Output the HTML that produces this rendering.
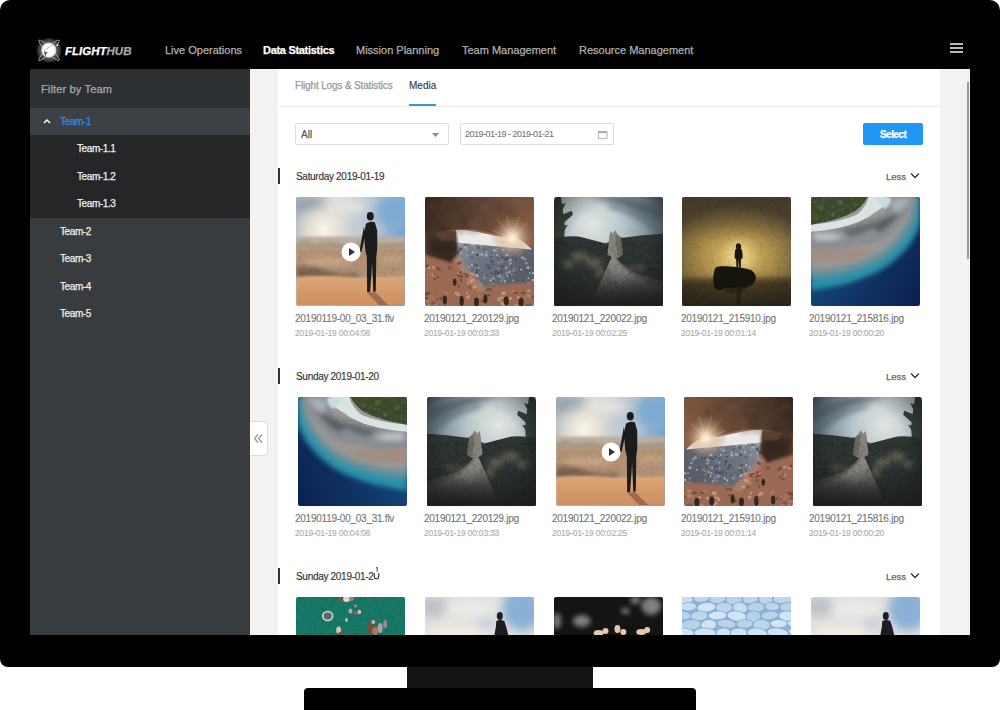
<!DOCTYPE html>
<html><head><meta charset="utf-8">
<style>
*{margin:0;padding:0;box-sizing:border-box}
html,body{width:1000px;height:710px;overflow:hidden;background:#fff;font-family:"Liberation Sans",sans-serif}
.abs{position:absolute}
.t{position:absolute;white-space:nowrap;line-height:1}
.t,.nav,.srow,.less{-webkit-text-stroke:0.25px currentColor}
.shead{-webkit-text-stroke:0.15px currentColor}
.fname,.fdate{-webkit-text-stroke:0.1px currentColor}
#mon{position:absolute;left:0;top:0;width:1000px;height:667px;background:#000;border-radius:10px 10px 8px 8px}
#neck{position:absolute;left:407px;top:667px;width:186px;height:21px;background:#141414}
#base{position:absolute;left:304px;top:688px;width:392px;height:30px;background:#000;border-radius:4px}
.nav{position:absolute;top:45px;font-size:11px;line-height:1;color:#b0b0b0;white-space:nowrap}
#side{position:absolute;left:30px;top:69px;width:220px;height:566px;background:#393c3f}
.srow{position:absolute;left:0;font-size:10px;line-height:1;color:#f0f0f0;white-space:nowrap;letter-spacing:-0.4px}
#gray{position:absolute;left:250px;top:69px;width:720px;height:566px;background:#f2f2f2}
#main{position:absolute;left:278px;top:69px;width:662px;height:566px;background:#fff}
#clip{position:absolute;left:250px;top:69px;width:720px;height:566px;overflow:hidden}
.photo{position:absolute;width:109px;height:109px;border-radius:2px;overflow:hidden;display:block}
.fname{position:absolute;font-size:10px;line-height:1;color:#737373;white-space:nowrap;letter-spacing:-0.25px}
.fdate{position:absolute;font-size:8.5px;line-height:1;color:#aaa;white-space:nowrap;letter-spacing:-0.2px}
.shead{position:absolute;font-size:10px;line-height:1;color:#333;white-space:nowrap;letter-spacing:-0.3px}
.less{position:absolute;font-size:9.5px;line-height:1;color:#666;white-space:nowrap}
.bar{position:absolute;left:278px;width:2px;height:16px;background:#333}
.mir{transform:scaleX(-1)}
</style></head><body>
<div id="mon"></div>
<div id="neck"></div>
<div id="base"></div>

<!-- logo -->
<svg class="abs" style="left:35px;top:36px" width="28" height="28" viewBox="0 0 28 28">
  <defs><radialGradient id="lg" cx="50%" cy="50%" r="50%"><stop offset="0" stop-color="#666"/><stop offset="0.6" stop-color="#5a5a5a"/><stop offset="0.85" stop-color="#3a3a3a"/><stop offset="1" stop-color="#111"/></radialGradient>
  <radialGradient id="lw" cx="50%" cy="50%" r="50%"><stop offset="0" stop-color="#fff"/><stop offset="0.8" stop-color="#f6f6f6"/><stop offset="1" stop-color="#bbb"/></radialGradient></defs>
  <circle cx="14" cy="14.3" r="12.5" fill="url(#lg)"/>
  <g fill="none" stroke="#b8b8b8" stroke-width="0.8">
    <ellipse cx="14" cy="14.3" rx="14.3" ry="2.6" transform="rotate(45 14 14.3)"/>
    <ellipse cx="14" cy="14.3" rx="14.3" ry="2.6" transform="rotate(-45 14 14.3)"/>
  </g>
  <circle cx="13.8" cy="14.2" r="7.6" fill="url(#lw)"/>
  <path d="M9 14.5 L19 8" stroke="#999" stroke-width="0.6"/>
  <circle cx="22.5" cy="9" r="0.9" fill="#ddd"/>
  <path d="M8.8 15.2 L13 16.8 L11.2 17.6 L10.6 20.5Z" fill="#444"/>
</svg>
<div class="t" style="left:65px;top:46px;font-size:11.5px;font-weight:bold;font-style:italic;color:#fff">FLIGHT<span style="color:#aaa">HUB</span></div>

<!-- header nav -->
<div class="nav" style="left:165px">Live Operations</div>
<div class="nav" style="left:263px;color:#fff;font-weight:bold;letter-spacing:-0.3px">Data Statistics</div>
<div class="nav" style="left:356px">Mission Planning</div>
<div class="nav" style="left:462px">Team Management</div>
<div class="nav" style="left:579px">Resource Management</div>
<!-- hamburger -->
<div class="abs" style="left:950px;top:43px;width:13px;height:2px;background:#bbb"></div>
<div class="abs" style="left:950px;top:47px;width:13px;height:2px;background:#bbb"></div>
<div class="abs" style="left:950px;top:51px;width:13px;height:2px;background:#bbb"></div>

<!-- sidebar -->
<div id="side">
  <div class="abs" style="left:0;top:0;width:220px;height:39px;background:#2d3033"></div>
  <div class="abs" style="left:0;top:39px;width:220px;height:27px;background:#3d4044"></div>
  <div class="abs" style="left:0;top:66px;width:220px;height:83px;background:#242628"></div>
  <div class="srow" style="top:15px;left:11px;color:#aaa;font-size:11px;letter-spacing:0.15px">Filter by Team</div>
  <svg class="abs" style="left:13px;top:49px" width="8" height="6" viewBox="0 0 8 6"><path d="M1 5 L4 2 L7 5" fill="none" stroke="#fff" stroke-width="1.5"/></svg>
  <div class="srow" style="top:48px;left:30px;color:#2f8de4">Team-1</div>
  <div class="srow" style="top:75px;left:47px">Team-1.1</div>
  <div class="srow" style="top:103px;left:47px">Team-1.2</div>
  <div class="srow" style="top:130px;left:47px">Team-1.3</div>
  <div class="srow" style="top:158px;left:30px">Team-2</div>
  <div class="srow" style="top:185px;left:30px">Team-3</div>
  <div class="srow" style="top:213px;left:30px">Team-4</div>
  <div class="srow" style="top:240px;left:30px">Team-5</div>
</div>

<div id="gray"></div>
<div id="main"></div>
<!-- scrollbar thumb -->
<div class="abs" style="left:967px;top:82px;width:2px;height:177px;background:#999"></div>

<!-- collapse button -->
<div class="abs" style="left:250px;top:421px;width:18px;height:35px;background:#fff;border:1px solid #ddd;border-left:none;border-radius:0 4px 4px 0"></div>
<svg class="abs" style="left:253px;top:433px" width="10" height="10" viewBox="0 0 10 10"><path d="M5 1.5 L1.5 5.5 L5 9.5 M9 1.5 L5.5 5.5 L9 9.5" fill="none" stroke="#999" stroke-width="1.3"/></svg>

<!-- tabs -->
<div class="t" style="left:295px;top:81px;font-size:10px;color:#999;letter-spacing:-0.15px">Flight Logs &amp; Statistics</div>
<div class="t" style="left:409px;top:81px;font-size:10px;color:#333;-webkit-text-stroke:0.1px #333">Media</div>
<div class="abs" style="left:409px;top:104px;width:27px;height:2px;background:#3b95dc"></div>
<div class="abs" style="left:278px;top:106px;width:662px;height:1px;background:#eee"></div>

<!-- filters -->
<div class="abs" style="left:295px;top:123px;width:154px;height:22px;border:1px solid #ddd;border-radius:2px"></div>
<div class="t" style="left:301px;top:130px;font-size:10px;color:#555">All</div>
<svg class="abs" style="left:431px;top:132px" width="9" height="6" viewBox="0 0 9 6"><path d="M1 1 L8 1 L4.5 5 Z" fill="#888"/></svg>
<div class="abs" style="left:460px;top:123px;width:154px;height:22px;border:1px solid #ddd;border-radius:2px"></div>
<div class="t" style="left:465px;top:130px;font-size:9px;color:#777;letter-spacing:-0.5px;-webkit-text-stroke:0.1px #777">2019-01-19 - 2019-01-21</div>
<svg class="abs" style="left:598px;top:130.5px" width="10" height="9" viewBox="0 0 10 9"><rect x="0.5" y="0.5" width="8.5" height="7" fill="none" stroke="#aaa" stroke-width="0.8"/><rect x="0.5" y="0.5" width="8.5" height="1.6" fill="#aaa"/></svg>
<div class="abs" style="left:863px;top:123px;width:60px;height:22px;background:#2196f3;border-radius:2px"></div>
<div class="t" style="left:880px;top:129.5px;font-size:10px;font-weight:bold;color:#fff;letter-spacing:-0.55px">Select</div>

<!-- sections -->
<div class="bar" style="top:168px"></div>
<div class="shead" style="left:296px;top:172px">Saturday 2019-01-19</div>
<div class="less" style="left:886px;top:172px">Less</div>
<svg class="abs" style="left:910px;top:172px" width="10" height="7" viewBox="0 0 10 7"><path d="M1 1.5 L5 5.5 L9 1.5" fill="none" stroke="#333" stroke-width="1.4"/></svg>

<div class="bar" style="top:368px"></div>
<div class="shead" style="left:296px;top:372px">Sunday 2019-01-20</div>
<div class="less" style="left:886px;top:372px">Less</div>
<svg class="abs" style="left:910px;top:372px" width="10" height="7" viewBox="0 0 10 7"><path d="M1 1.5 L5 5.5 L9 1.5" fill="none" stroke="#333" stroke-width="1.4"/></svg>

<div class="bar" style="top:568px"></div>
<div class="shead" style="left:296px;top:572px">Sunday 2019-01-2</div>
<svg class="abs" style="left:373px;top:566px" width="7" height="14" viewBox="0 0 7 14"><path d="M1.2 7 L1.2 10 Q1.2 13 3.5 13 Q5.8 13 5.8 10 L5.8 7" fill="none" stroke="#333" stroke-width="1.1"/><path d="M3 2.2 L4.2 1.2 L4.2 5.8" fill="none" stroke="#333" stroke-width="0.9"/></svg>
<div class="less" style="left:886px;top:572px">Less</div>
<svg class="abs" style="left:910px;top:572px" width="10" height="7" viewBox="0 0 10 7"><path d="M1 1.5 L5 5.5 L9 1.5" fill="none" stroke="#333" stroke-width="1.4"/></svg>

<svg width="0" height="0" style="position:absolute;left:0;top:0">
<defs>
  <filter id="bl05" x="-10%" y="-10%" width="120%" height="120%"><feGaussianBlur stdDeviation="0.6"/></filter>
  <filter id="bl1" x="-10%" y="-10%" width="120%" height="120%"><feGaussianBlur stdDeviation="1.2"/></filter>
  <filter id="bl2" x="-20%" y="-20%" width="140%" height="140%"><feGaussianBlur stdDeviation="2.5"/></filter>
  <filter id="bl4" x="-30%" y="-30%" width="160%" height="160%"><feGaussianBlur stdDeviation="5"/></filter>
  <filter id="noise" x="0" y="0" width="100%" height="100%">
    <feTurbulence type="fractalNoise" baseFrequency="0.35" numOctaves="2" seed="3" result="n"/>
    <feColorMatrix type="matrix" values="0 0 0 0 0  0 0 0 0 0  0 0 0 0 0  0 0 0 -1.4 0.9" in="n"/>
    <feComposite in2="SourceGraphic" operator="in"/>
  </filter>
  <filter id="grain" x="0" y="0" width="100%" height="100%">
    <feTurbulence type="fractalNoise" baseFrequency="0.28" numOctaves="3" seed="7"/>
    <feColorMatrix type="matrix" values="0 0 0 0 0  0 0 0 0 0  0 0 0 0 0  2.5 0 0 0 -1.1"/><feGaussianBlur stdDeviation="0.4"/>
  </filter>
  <filter id="grainw" x="0" y="0" width="100%" height="100%">
    <feTurbulence type="fractalNoise" baseFrequency="0.28" numOctaves="3" seed="11"/>
    <feColorMatrix type="matrix" values="0 0 0 0 1  0 0 0 0 1  0 0 0 0 1  2.5 0 0 0 -1.2"/><feGaussianBlur stdDeviation="0.4"/>
  </filter>
  <!-- desert gradients -->
  <linearGradient id="dsky" x1="0" y1="0" x2="110" y2="30" gradientUnits="userSpaceOnUse">
    <stop offset="0" stop-color="#adb6be"/><stop offset="0.35" stop-color="#e0ded8"/><stop offset="0.62" stop-color="#bcc8d2"/><stop offset="1" stop-color="#7aa6d0"/>
  </linearGradient>
  <radialGradient id="dsun" cx="28" cy="32" r="30" gradientUnits="userSpaceOnUse"><stop offset="0" stop-color="#fbf6ea"/><stop offset="0.5" stop-color="#ece5d8" stop-opacity="0.7"/><stop offset="1" stop-color="#e0d8cc" stop-opacity="0"/></radialGradient>
  <linearGradient id="dsand" x1="0" y1="80" x2="0" y2="110" gradientUnits="userSpaceOnUse"><stop offset="0" stop-color="#dca676"/><stop offset="1" stop-color="#cc8e60"/></linearGradient>
  <!-- sunset -->
  <radialGradient id="sglow" cx="56" cy="60" r="70" gradientUnits="userSpaceOnUse" gradientTransform="translate(56 60) scale(1.1 0.75) translate(-56 -60)"><stop offset="0" stop-color="#ecd27e"/><stop offset="0.2" stop-color="#d0b060"/><stop offset="0.5" stop-color="#a88a4a"/><stop offset="0.8" stop-color="#76643c"/><stop offset="1" stop-color="#544630"/></radialGradient>
  <linearGradient id="sdark" x1="0" y1="0" x2="0" y2="110" gradientUnits="userSpaceOnUse"><stop offset="0" stop-color="#3a3022" stop-opacity="0.55"/><stop offset="0.4" stop-color="#3a3022" stop-opacity="0"/><stop offset="0.72" stop-color="#2a2418" stop-opacity="0"/><stop offset="0.8" stop-color="#2a2418" stop-opacity="0.55"/><stop offset="1" stop-color="#201a12" stop-opacity="0.8"/></linearGradient>
  <!-- castle sky -->
  <radialGradient id="csky" cx="38" cy="28" r="80" gradientUnits="userSpaceOnUse"><stop offset="0" stop-color="#e2e6e4"/><stop offset="0.4" stop-color="#b8c4c8"/><stop offset="0.75" stop-color="#7a8a94"/><stop offset="1" stop-color="#4a5862"/></radialGradient>
  <linearGradient id="croad" x1="0" y1="60" x2="0" y2="110" gradientUnits="userSpaceOnUse"><stop offset="0" stop-color="#9a9894"/><stop offset="0.45" stop-color="#6c6c6a"/><stop offset="1" stop-color="#2c2c2c"/></linearGradient>
  <radialGradient id="vig" cx="55" cy="50" r="78" gradientUnits="userSpaceOnUse"><stop offset="0.5" stop-color="#000" stop-opacity="0"/><stop offset="1" stop-color="#000" stop-opacity="0.6"/></radialGradient>
  <!-- cave -->
  <linearGradient id="cvceil" x1="0" y1="0" x2="110" y2="50" gradientUnits="userSpaceOnUse"><stop offset="0" stop-color="#34261e"/><stop offset="0.5" stop-color="#624634"/><stop offset="1" stop-color="#8a6048"/></linearGradient>
  <radialGradient id="cvsun" cx="88" cy="41" r="22" gradientUnits="userSpaceOnUse"><stop offset="0" stop-color="#fffaf0"/><stop offset="0.25" stop-color="#f0d8b8" stop-opacity="0.9"/><stop offset="1" stop-color="#b08060" stop-opacity="0"/></radialGradient>
  <linearGradient id="ccity" x1="30" y1="46" x2="90" y2="90" gradientUnits="userSpaceOnUse"><stop offset="0" stop-color="#8c9098"/><stop offset="0.5" stop-color="#6a7280"/><stop offset="1" stop-color="#5a5e68"/></linearGradient>
  <!-- beach -->
  <linearGradient id="bdeep" x1="0" y1="60" x2="110" y2="110" gradientUnits="userSpaceOnUse"><stop offset="0" stop-color="#15487a"/><stop offset="1" stop-color="#0a2050"/></linearGradient>
  <!-- ice -->
  <pattern id="icep" width="20" height="13" patternUnits="userSpaceOnUse"><rect width="20" height="13" fill="#8fb4d8"/><ellipse cx="10" cy="6.5" rx="8.5" ry="5" fill="#c4dcf0"/></pattern>
  <pattern id="icep2" width="20" height="13" x="10" y="6" patternUnits="userSpaceOnUse"><ellipse cx="10" cy="6.5" rx="6" ry="3.5" fill="#d6e8f6"/></pattern>
</defs>

<symbol id="desert" viewBox="0 0 110 110">
  <rect width="110" height="110" fill="url(#dsky)"/>
  <g filter="url(#bl4)">
    <ellipse cx="12" cy="8" rx="20" ry="8" fill="#98a4b0"/>
    <ellipse cx="50" cy="10" rx="22" ry="6" fill="#e6e4e0"/>
    <ellipse cx="98" cy="14" rx="16" ry="16" fill="#7eaad2"/>
    <ellipse cx="70" cy="34" rx="18" ry="6" fill="#c4ccd4"/>
  </g>
  <rect width="110" height="52" fill="url(#dsun)"/>
  <rect y="40" width="110" height="14" fill="#bcae9e" filter="url(#bl1)"/>
  <path d="M0 46 L10 44 L20 47 L35 45 L50 48 L70 45 L90 47 L110 45 L110 53 L0 53Z" fill="#a89886" filter="url(#bl1)"/>
  <rect y="52" width="110" height="30" fill="#b39274" filter="url(#bl1)"/>
  <g filter="url(#bl2)">
    <ellipse cx="32" cy="65" rx="24" ry="4" fill="#caa886"/>
    <ellipse cx="96" cy="63" rx="14" ry="4" fill="#c2a282"/>
    <path d="M0 71 Q15 68 30 74 T62 76 L62 81 L0 82Z" fill="#7a6450"/>
  </g>
  <rect y="54" width="110" height="26" filter="url(#grain)" opacity="0.07"/>
  <path d="M0 81 Q30 78 62 82 L110 80 L110 110 L0 110Z" fill="url(#dsand)" filter="url(#bl1)"/>
  <!-- man -->
  <g fill="#1a1a1f" filter="url(#bl05)">
    <ellipse cx="75" cy="19.5" rx="3.5" ry="4.3"/>
    <path d="M70.5 27 Q75 24 79.5 25.5 L82 34 L82 52 L81 60 L80.5 95 L78 96 L76.8 66 L74.8 96 L71.8 96 L71.5 60 L70 54 L68.5 38Z"/>
    <path d="M68.5 30 L64 55 L66 56 L70 38Z"/>
  </g>
  <path d="M72 97 L84 109 L93 109 L80 96Z" fill="#6a4630" opacity="0.5" filter="url(#bl05)"/>
</symbol>

<symbol id="cave" viewBox="0 0 110 110">
  <rect width="110" height="110" fill="#8e6652"/>
  <path d="M30 45 L110 52 L110 92 L62 94 L32 66Z" fill="url(#ccity)"/>
  <g filter="url(#bl05)" opacity="0.75"><circle cx="52.0" cy="55.9" r="0.8" fill="#c4c8cc"/><circle cx="89.3" cy="71.7" r="1.1" fill="#8a7a70"/><circle cx="32.4" cy="55.7" r="1.2" fill="#8a7a70"/><circle cx="74.9" cy="80.1" r="1.2" fill="#c4c8cc"/><circle cx="47.6" cy="73.9" r="1.5" fill="#5a6270"/><circle cx="90.7" cy="52.8" r="1.0" fill="#4a505c"/><circle cx="56.9" cy="49.5" r="1.0" fill="#b0b8c0"/><circle cx="57.5" cy="58.0" r="1.4" fill="#b0b8c0"/><circle cx="60.3" cy="72.0" r="1.3" fill="#5a6270"/><circle cx="100.8" cy="62.7" r="1.3" fill="#9aa4ae"/><circle cx="33.7" cy="56.2" r="1.6" fill="#3a404a"/><circle cx="98.4" cy="87.5" r="1.0" fill="#4a505c"/><circle cx="80.9" cy="62.9" r="1.0" fill="#3a404a"/><circle cx="83.6" cy="79.4" r="1.3" fill="#c4c8cc"/><circle cx="78.7" cy="53.4" r="0.9" fill="#c4c8cc"/><circle cx="67.0" cy="58.2" r="1.3" fill="#c4c8cc"/><circle cx="47.6" cy="60.9" r="1.4" fill="#5a6270"/><circle cx="55.2" cy="58.1" r="1.5" fill="#9aa4ae"/><circle cx="75.4" cy="80.2" r="1.3" fill="#9aa4ae"/><circle cx="61.7" cy="89.8" r="0.8" fill="#4a505c"/><circle cx="73.1" cy="81.6" r="1.5" fill="#4a505c"/><circle cx="62.0" cy="55.7" r="1.2" fill="#9aa4ae"/><circle cx="37.3" cy="47.3" r="0.8" fill="#b0b8c0"/><circle cx="77.7" cy="63.9" r="1.6" fill="#8a7a70"/><circle cx="87.7" cy="78.4" r="1.4" fill="#8a7a70"/><circle cx="91.5" cy="61.7" r="1.1" fill="#3a404a"/><circle cx="66.3" cy="91.7" r="0.9" fill="#c4c8cc"/><circle cx="70.0" cy="53.8" r="1.5" fill="#b0b8c0"/><circle cx="53.9" cy="76.3" r="0.9" fill="#8a7a70"/><circle cx="59.9" cy="52.9" r="1.5" fill="#5a6270"/><circle cx="103.5" cy="74.3" r="0.7" fill="#4a505c"/><circle cx="104.3" cy="88.1" r="1.4" fill="#5a6270"/><circle cx="49.2" cy="56.8" r="1.6" fill="#8a7a70"/><circle cx="91.3" cy="51.3" r="1.6" fill="#4a505c"/><circle cx="104.3" cy="82.0" r="0.9" fill="#c4c8cc"/><circle cx="82.0" cy="66.5" r="1.1" fill="#8a7a70"/><circle cx="49.8" cy="48.1" r="1.2" fill="#b0b8c0"/><circle cx="48.4" cy="55.8" r="1.3" fill="#b0b8c0"/><circle cx="34.7" cy="48.3" r="1.5" fill="#b0b8c0"/><circle cx="35.7" cy="56.7" r="1.1" fill="#c4c8cc"/><circle cx="73.1" cy="80.4" r="1.2" fill="#8a7a70"/><circle cx="49.4" cy="68.2" r="0.9" fill="#4a505c"/><circle cx="63.9" cy="67.9" r="0.7" fill="#c4c8cc"/><circle cx="82.3" cy="76.7" r="1.1" fill="#b0b8c0"/><circle cx="57.1" cy="87.2" r="0.9" fill="#9aa4ae"/><circle cx="72.9" cy="51.9" r="1.0" fill="#9aa4ae"/><circle cx="65.5" cy="87.2" r="0.8" fill="#8a7a70"/><circle cx="82.2" cy="71.5" r="1.6" fill="#b0b8c0"/><circle cx="104.1" cy="86.6" r="1.1" fill="#9aa4ae"/><circle cx="68.5" cy="87.4" r="0.8" fill="#b0b8c0"/><circle cx="30.2" cy="64.1" r="1.4" fill="#5a6270"/><circle cx="52.8" cy="79.1" r="1.6" fill="#c4c8cc"/><circle cx="74.5" cy="80.2" r="0.9" fill="#9aa4ae"/><circle cx="47.4" cy="47.9" r="1.2" fill="#c4c8cc"/><circle cx="76.7" cy="69.6" r="1.2" fill="#5a6270"/><circle cx="62.3" cy="91.1" r="0.9" fill="#8a7a70"/><circle cx="77.6" cy="75.3" r="1.3" fill="#4a505c"/><circle cx="75.2" cy="60.5" r="0.9" fill="#3a404a"/><circle cx="87.3" cy="56.7" r="0.8" fill="#4a505c"/><circle cx="81.6" cy="67.4" r="1.5" fill="#5a6270"/><circle cx="75.0" cy="49.9" r="0.9" fill="#8a7a70"/><circle cx="100.5" cy="88.1" r="1.0" fill="#3a404a"/><circle cx="65.1" cy="71.6" r="1.3" fill="#3a404a"/><circle cx="109.0" cy="77.0" r="1.3" fill="#b0b8c0"/><circle cx="74.4" cy="90.7" r="1.5" fill="#b0b8c0"/><circle cx="40.7" cy="50.7" r="1.4" fill="#b0b8c0"/><circle cx="42.4" cy="58.8" r="1.3" fill="#9aa4ae"/><circle cx="51.1" cy="68.9" r="0.7" fill="#5a6270"/><circle cx="80.7" cy="85.6" r="0.7" fill="#b0b8c0"/><circle cx="91.7" cy="76.2" r="0.8" fill="#3a404a"/><circle cx="65.3" cy="79.6" r="0.7" fill="#8a7a70"/><circle cx="102.3" cy="71.7" r="1.0" fill="#5a6270"/><circle cx="74.2" cy="66.1" r="1.0" fill="#b0b8c0"/><circle cx="101.9" cy="84.0" r="0.7" fill="#5a6270"/><circle cx="58.6" cy="78.4" r="0.8" fill="#c4c8cc"/><circle cx="92.4" cy="88.3" r="1.6" fill="#4a505c"/><circle cx="90.0" cy="90.4" r="1.5" fill="#9aa4ae"/><circle cx="108.1" cy="84.7" r="0.7" fill="#4a505c"/><circle cx="88.9" cy="61.3" r="1.4" fill="#4a505c"/><circle cx="99.1" cy="84.7" r="0.8" fill="#3a404a"/><circle cx="86.1" cy="63.7" r="1.5" fill="#b0b8c0"/><circle cx="66.8" cy="60.0" r="1.5" fill="#5a6270"/><circle cx="61.9" cy="58.7" r="1.6" fill="#b0b8c0"/><circle cx="52.3" cy="76.4" r="1.3" fill="#4a505c"/><circle cx="97.5" cy="61.2" r="0.8" fill="#b0b8c0"/><circle cx="107.6" cy="53.7" r="0.7" fill="#3a404a"/><circle cx="77.7" cy="61.9" r="1.0" fill="#5a6270"/><circle cx="78.5" cy="70.1" r="1.5" fill="#4a505c"/><circle cx="45.2" cy="47.2" r="0.7" fill="#4a505c"/><circle cx="104.0" cy="71.4" r="1.5" fill="#c4c8cc"/><circle cx="89.0" cy="54.7" r="0.8" fill="#4a505c"/><circle cx="83.1" cy="61.2" r="1.3" fill="#3a404a"/><circle cx="70.6" cy="77.7" r="1.1" fill="#3a404a"/><circle cx="53.7" cy="51.2" r="1.3" fill="#4a505c"/><circle cx="60.3" cy="81.7" r="1.3" fill="#9aa4ae"/><circle cx="54.1" cy="71.8" r="1.0" fill="#b0b8c0"/><circle cx="78.5" cy="60.8" r="1.1" fill="#4a505c"/><circle cx="47.1" cy="68.2" r="1.4" fill="#5a6270"/><circle cx="82.7" cy="58.9" r="1.3" fill="#c4c8cc"/><circle cx="56.8" cy="85.1" r="0.9" fill="#5a6270"/><circle cx="54.8" cy="84.5" r="0.7" fill="#9aa4ae"/><circle cx="49.6" cy="68.3" r="1.4" fill="#5a6270"/><circle cx="66.4" cy="88.4" r="0.9" fill="#8a7a70"/><circle cx="85.7" cy="69.2" r="0.8" fill="#9aa4ae"/><circle cx="85.0" cy="88.7" r="1.4" fill="#5a6270"/><circle cx="66.5" cy="84.3" r="1.2" fill="#c4c8cc"/><circle cx="74.7" cy="60.5" r="1.5" fill="#5a6270"/><circle cx="79.0" cy="80.2" r="1.1" fill="#8a7a70"/><circle cx="102.5" cy="66.8" r="1.4" fill="#9aa4ae"/><circle cx="68.0" cy="57.7" r="1.5" fill="#9aa4ae"/><circle cx="68.8" cy="56.7" r="0.8" fill="#4a505c"/><circle cx="52.9" cy="58.3" r="1.5" fill="#3a404a"/><circle cx="36.4" cy="52.4" r="1.3" fill="#4a505c"/><circle cx="62.6" cy="71.6" r="0.8" fill="#4a505c"/><circle cx="96.6" cy="64.1" r="1.2" fill="#5a6270"/><circle cx="85.6" cy="87.0" r="1.2" fill="#5a6270"/><circle cx="68.2" cy="91.2" r="1.4" fill="#3a404a"/><circle cx="98.3" cy="91.7" r="1.2" fill="#4a505c"/><circle cx="88.8" cy="84.2" r="1.1" fill="#9aa4ae"/><circle cx="51.8" cy="68.8" r="1.0" fill="#4a505c"/><circle cx="84.3" cy="64.8" r="1.5" fill="#9aa4ae"/><circle cx="72.7" cy="89.4" r="1.2" fill="#8a7a70"/><circle cx="46.9" cy="61.0" r="1.5" fill="#5a6270"/><circle cx="63.7" cy="85.9" r="0.7" fill="#4a505c"/><circle cx="58.0" cy="76.9" r="1.6" fill="#5a6270"/><circle cx="33.2" cy="46.5" r="0.9" fill="#9aa4ae"/><circle cx="31.6" cy="52.5" r="1.1" fill="#9aa4ae"/><circle cx="67.2" cy="57.6" r="0.9" fill="#3a404a"/><circle cx="78.6" cy="81.6" r="1.4" fill="#b0b8c0"/><circle cx="43.1" cy="60.2" r="0.7" fill="#8a7a70"/><circle cx="55.0" cy="78.2" r="1.1" fill="#4a505c"/><circle cx="85.2" cy="75.7" r="1.3" fill="#b0b8c0"/><circle cx="54.1" cy="78.5" r="0.8" fill="#5a6270"/><circle cx="108.7" cy="83.3" r="1.2" fill="#3a404a"/><circle cx="63.6" cy="69.0" r="1.6" fill="#4a505c"/><circle cx="80.8" cy="85.6" r="0.8" fill="#c4c8cc"/><circle cx="44.1" cy="70.6" r="0.9" fill="#c4c8cc"/><circle cx="94.7" cy="71.4" r="1.1" fill="#4a505c"/><circle cx="96.1" cy="74.0" r="1.5" fill="#3a404a"/><circle cx="100.5" cy="56.9" r="1.2" fill="#4a505c"/><circle cx="83.5" cy="61.5" r="1.5" fill="#4a505c"/><circle cx="44.5" cy="55.4" r="0.9" fill="#5a6270"/><circle cx="52.4" cy="74.2" r="1.2" fill="#3a404a"/><circle cx="71.3" cy="54.4" r="1.3" fill="#9aa4ae"/><circle cx="69.1" cy="82.2" r="1.1" fill="#c4c8cc"/><circle cx="86.9" cy="67.0" r="0.8" fill="#b0b8c0"/><circle cx="54.5" cy="73.5" r="1.2" fill="#4a505c"/><circle cx="74.0" cy="62.2" r="0.9" fill="#4a505c"/><circle cx="50.1" cy="50.9" r="1.0" fill="#9aa4ae"/><circle cx="89.4" cy="91.6" r="0.9" fill="#c4c8cc"/><circle cx="47.3" cy="68.7" r="1.2" fill="#c4c8cc"/><circle cx="90.8" cy="74.2" r="1.4" fill="#b0b8c0"/><circle cx="53.7" cy="62.7" r="0.7" fill="#3a404a"/><circle cx="72.7" cy="58.4" r="1.2" fill="#b0b8c0"/><circle cx="85.8" cy="51.2" r="1.4" fill="#5a6270"/><circle cx="52.7" cy="68.5" r="0.9" fill="#3a404a"/><circle cx="68.2" cy="85.3" r="1.1" fill="#4a505c"/><circle cx="76.2" cy="78.6" r="0.8" fill="#9aa4ae"/><circle cx="75.0" cy="59.9" r="0.8" fill="#9aa4ae"/><circle cx="91.2" cy="74.7" r="1.3" fill="#5a6270"/><circle cx="92.1" cy="63.6" r="1.0" fill="#4a505c"/><circle cx="77.1" cy="66.0" r="1.3" fill="#8a7a70"/><circle cx="78.8" cy="81.3" r="0.9" fill="#5a6270"/><circle cx="42.6" cy="53.5" r="0.8" fill="#b0b8c0"/><circle cx="62.7" cy="78.8" r="1.0" fill="#4a505c"/><circle cx="86.2" cy="67.2" r="0.9" fill="#c4c8cc"/><circle cx="77.2" cy="84.4" r="1.1" fill="#9aa4ae"/><circle cx="73.6" cy="76.7" r="1.4" fill="#3a404a"/><circle cx="35.7" cy="53.1" r="1.2" fill="#3a404a"/><circle cx="95.9" cy="90.1" r="0.8" fill="#4a505c"/><circle cx="85.1" cy="79.3" r="1.2" fill="#3a404a"/><circle cx="69.5" cy="48.9" r="1.5" fill="#b0b8c0"/><circle cx="88.8" cy="74.6" r="0.8" fill="#b0b8c0"/><circle cx="107.0" cy="86.0" r="1.2" fill="#8a7a70"/><circle cx="95.7" cy="73.2" r="1.4" fill="#5a6270"/><circle cx="67.6" cy="76.9" r="0.9" fill="#3a404a"/><circle cx="76.8" cy="76.1" r="1.6" fill="#4a505c"/><circle cx="67.6" cy="65.0" r="1.3" fill="#3a404a"/><circle cx="98.6" cy="61.2" r="1.1" fill="#c4c8cc"/><circle cx="83.0" cy="64.6" r="1.2" fill="#5a6270"/><circle cx="66.4" cy="60.4" r="0.8" fill="#3a404a"/><circle cx="91.8" cy="87.4" r="1.6" fill="#5a6270"/><circle cx="82.6" cy="71.6" r="0.7" fill="#4a505c"/><circle cx="71.5" cy="75.5" r="1.3" fill="#4a505c"/><circle cx="90.8" cy="55.0" r="0.8" fill="#8a7a70"/><circle cx="80.4" cy="84.2" r="0.8" fill="#c4c8cc"/><circle cx="74.1" cy="72.1" r="0.9" fill="#b0b8c0"/><circle cx="105.8" cy="76.7" r="1.1" fill="#9aa4ae"/><circle cx="87.3" cy="69.9" r="1.1" fill="#3a404a"/><circle cx="68.6" cy="68.1" r="1.2" fill="#4a505c"/><circle cx="60.7" cy="90.2" r="1.4" fill="#8a7a70"/><circle cx="40.9" cy="48.4" r="1.4" fill="#5a6270"/><circle cx="63.2" cy="90.8" r="0.9" fill="#8a7a70"/><circle cx="97.0" cy="73.4" r="1.1" fill="#c4c8cc"/><circle cx="57.6" cy="72.0" r="1.0" fill="#8a7a70"/><circle cx="104.6" cy="87.6" r="0.9" fill="#c4c8cc"/><circle cx="60.6" cy="86.9" r="0.7" fill="#4a505c"/><circle cx="89.6" cy="79.6" r="1.0" fill="#5a6270"/><circle cx="109.1" cy="83.8" r="1.6" fill="#c4c8cc"/><circle cx="70.2" cy="73.9" r="0.8" fill="#5a6270"/></g>
  <path d="M0 52 L30 58 L40 72 L58 90 L80 88 L110 86 L110 110 L0 110Z" fill="#9a6a54" filter="url(#bl1)"/>
  <path d="M26 60 L34 62 L50 80 L62 94 L54 96 L38 78Z" fill="#b88a70" opacity="0.6" filter="url(#bl1)"/>
  <g filter="url(#bl05)" opacity="0.7"><ellipse cx="15.9" cy="102.5" rx="1.2" ry="1.7" fill="#5e3e30" transform="rotate(-14 15.9 102.5)"/><ellipse cx="8.8" cy="71.1" rx="2.0" ry="1.2" fill="#d0a888" transform="rotate(13 8.8 71.1)"/><ellipse cx="83.5" cy="102.6" rx="2.5" ry="1.1" fill="#c09478" transform="rotate(11 83.5 102.6)"/><ellipse cx="9.9" cy="108.7" rx="2.1" ry="1.6" fill="#c09478" transform="rotate(24 9.9 108.7)"/><ellipse cx="5.1" cy="98.2" rx="1.9" ry="1.3" fill="#b07e64" transform="rotate(-15 5.1 98.2)"/><ellipse cx="45.3" cy="91.5" rx="1.4" ry="0.9" fill="#5e3e30" transform="rotate(22 45.3 91.5)"/><ellipse cx="28.1" cy="52.5" rx="3.3" ry="1.6" fill="#704a3a" transform="rotate(-21 28.1 52.5)"/><ellipse cx="42.3" cy="80.0" rx="2.0" ry="1.2" fill="#5e3e30" transform="rotate(-12 42.3 80.0)"/><ellipse cx="0.9" cy="102.2" rx="3.3" ry="1.7" fill="#c09478" transform="rotate(20 0.9 102.2)"/><ellipse cx="99.3" cy="97.0" rx="2.5" ry="1.2" fill="#5e3e30" transform="rotate(8 99.3 97.0)"/><ellipse cx="34.0" cy="77.6" rx="1.9" ry="1.0" fill="#d0a888" transform="rotate(25 34.0 77.6)"/><ellipse cx="35.9" cy="76.1" rx="1.3" ry="1.4" fill="#5e3e30" transform="rotate(28 35.9 76.1)"/><ellipse cx="58.4" cy="105.0" rx="1.6" ry="1.8" fill="#5e3e30" transform="rotate(-1 58.4 105.0)"/><ellipse cx="88.7" cy="95.3" rx="3.0" ry="1.4" fill="#b07e64" transform="rotate(-25 88.7 95.3)"/><ellipse cx="43.7" cy="101.1" rx="1.9" ry="1.7" fill="#d0a888" transform="rotate(-29 43.7 101.1)"/><ellipse cx="64.3" cy="99.7" rx="1.3" ry="1.1" fill="#b07e64" transform="rotate(-28 64.3 99.7)"/><ellipse cx="7.0" cy="99.8" rx="2.6" ry="0.9" fill="#b07e64" transform="rotate(-27 7.0 99.8)"/><ellipse cx="4.1" cy="109.8" rx="1.2" ry="1.9" fill="#c09478" transform="rotate(-22 4.1 109.8)"/><ellipse cx="49.9" cy="90.9" rx="2.0" ry="1.7" fill="#d0a888" transform="rotate(-21 49.9 90.9)"/><ellipse cx="40.8" cy="77.7" rx="3.1" ry="0.9" fill="#5e3e30" transform="rotate(11 40.8 77.7)"/><ellipse cx="59.9" cy="108.7" rx="1.2" ry="1.1" fill="#b07e64" transform="rotate(28 59.9 108.7)"/><ellipse cx="104.4" cy="99.8" rx="2.7" ry="1.6" fill="#c09478" transform="rotate(6 104.4 99.8)"/><ellipse cx="2.3" cy="97.6" rx="3.5" ry="1.7" fill="#5e3e30" transform="rotate(-18 2.3 97.6)"/><ellipse cx="64.5" cy="99.2" rx="1.8" ry="1.0" fill="#5e3e30" transform="rotate(24 64.5 99.2)"/><ellipse cx="0.3" cy="101.8" rx="3.5" ry="1.4" fill="#5e3e30" transform="rotate(18 0.3 101.8)"/><ellipse cx="12.1" cy="102.3" rx="1.0" ry="1.7" fill="#5e3e30" transform="rotate(-16 12.1 102.3)"/><ellipse cx="35.6" cy="62.1" rx="1.3" ry="1.3" fill="#c09478" transform="rotate(-23 35.6 62.1)"/><ellipse cx="7.0" cy="78.0" rx="2.3" ry="0.9" fill="#b07e64" transform="rotate(0 7.0 78.0)"/><ellipse cx="86.2" cy="102.3" rx="1.8" ry="1.6" fill="#d0a888" transform="rotate(-28 86.2 102.3)"/><ellipse cx="109.8" cy="101.1" rx="2.7" ry="1.4" fill="#704a3a" transform="rotate(25 109.8 101.1)"/><ellipse cx="8.1" cy="56.7" rx="1.4" ry="1.0" fill="#d0a888" transform="rotate(7 8.1 56.7)"/><ellipse cx="64.4" cy="93.3" rx="3.5" ry="1.4" fill="#704a3a" transform="rotate(-3 64.4 93.3)"/><ellipse cx="77.2" cy="101.5" rx="2.8" ry="1.1" fill="#d0a888" transform="rotate(-3 77.2 101.5)"/><ellipse cx="25.1" cy="71.7" rx="2.0" ry="1.7" fill="#704a3a" transform="rotate(-11 25.1 71.7)"/><ellipse cx="34.4" cy="66.8" rx="2.7" ry="1.4" fill="#5e3e30" transform="rotate(-25 34.4 66.8)"/><ellipse cx="9.4" cy="77.0" rx="3.0" ry="1.5" fill="#b07e64" transform="rotate(5 9.4 77.0)"/><ellipse cx="13.4" cy="72.5" rx="3.2" ry="1.7" fill="#704a3a" transform="rotate(28 13.4 72.5)"/><ellipse cx="11.9" cy="101.0" rx="1.3" ry="1.1" fill="#b07e64" transform="rotate(-16 11.9 101.0)"/><ellipse cx="47.2" cy="84.5" rx="2.5" ry="1.6" fill="#d0a888" transform="rotate(-28 47.2 84.5)"/><ellipse cx="102.2" cy="100.1" rx="1.1" ry="1.1" fill="#b07e64" transform="rotate(16 102.2 100.1)"/><ellipse cx="20.0" cy="60.3" rx="1.2" ry="1.7" fill="#704a3a" transform="rotate(28 20.0 60.3)"/><ellipse cx="10.1" cy="82.8" rx="2.0" ry="1.2" fill="#704a3a" transform="rotate(-8 10.1 82.8)"/><ellipse cx="79.4" cy="97.1" rx="2.5" ry="1.9" fill="#d0a888" transform="rotate(-21 79.4 97.1)"/><ellipse cx="9.0" cy="77.7" rx="2.2" ry="1.3" fill="#704a3a" transform="rotate(-14 9.0 77.7)"/><ellipse cx="43.5" cy="86.8" rx="1.5" ry="1.9" fill="#c09478" transform="rotate(16 43.5 86.8)"/><ellipse cx="13.2" cy="80.8" rx="1.4" ry="1.3" fill="#704a3a" transform="rotate(12 13.2 80.8)"/><ellipse cx="55.0" cy="100.3" rx="1.2" ry="1.8" fill="#b07e64" transform="rotate(-27 55.0 100.3)"/><ellipse cx="2.1" cy="105.4" rx="2.4" ry="1.5" fill="#b07e64" transform="rotate(13 2.1 105.4)"/><ellipse cx="2.3" cy="70.8" rx="2.2" ry="1.6" fill="#d0a888" transform="rotate(-8 2.3 70.8)"/><ellipse cx="8.7" cy="102.5" rx="1.6" ry="1.7" fill="#b07e64" transform="rotate(-25 8.7 102.5)"/><ellipse cx="21.3" cy="97.0" rx="2.8" ry="1.8" fill="#b07e64" transform="rotate(19 21.3 97.0)"/><ellipse cx="26.0" cy="60.5" rx="1.4" ry="1.0" fill="#5e3e30" transform="rotate(16 26.0 60.5)"/><ellipse cx="8.3" cy="107.2" rx="2.2" ry="1.5" fill="#704a3a" transform="rotate(5 8.3 107.2)"/><ellipse cx="74.9" cy="103.2" rx="1.8" ry="2.0" fill="#d0a888" transform="rotate(-11 74.9 103.2)"/><ellipse cx="48.4" cy="79.2" rx="3.0" ry="1.5" fill="#b07e64" transform="rotate(-9 48.4 79.2)"/><ellipse cx="8.2" cy="78.8" rx="1.1" ry="1.8" fill="#c09478" transform="rotate(-25 8.2 78.8)"/><ellipse cx="95.1" cy="101.6" rx="2.5" ry="1.3" fill="#d0a888" transform="rotate(5 95.1 101.6)"/><ellipse cx="105.0" cy="94.9" rx="2.1" ry="1.8" fill="#c09478" transform="rotate(9 105.0 94.9)"/><ellipse cx="35.4" cy="79.6" rx="3.4" ry="1.3" fill="#5e3e30" transform="rotate(19 35.4 79.6)"/><ellipse cx="92.1" cy="109.0" rx="2.3" ry="1.0" fill="#c09478" transform="rotate(-15 92.1 109.0)"/><ellipse cx="48.2" cy="77.5" rx="2.5" ry="1.2" fill="#d0a888" transform="rotate(25 48.2 77.5)"/><ellipse cx="42.6" cy="96.9" rx="1.1" ry="1.6" fill="#d0a888" transform="rotate(-10 42.6 96.9)"/><ellipse cx="36.3" cy="84.4" rx="1.7" ry="1.7" fill="#704a3a" transform="rotate(9 36.3 84.4)"/><ellipse cx="99.7" cy="102.7" rx="1.2" ry="1.6" fill="#b07e64" transform="rotate(25 99.7 102.7)"/><ellipse cx="34.1" cy="90.1" rx="1.3" ry="1.7" fill="#704a3a" transform="rotate(-25 34.1 90.1)"/><ellipse cx="77.3" cy="106.9" rx="1.2" ry="1.6" fill="#d0a888" transform="rotate(1 77.3 106.9)"/><ellipse cx="2.0" cy="69.9" rx="1.9" ry="1.7" fill="#5e3e30" transform="rotate(-18 2.0 69.9)"/><ellipse cx="32.5" cy="97.7" rx="2.9" ry="1.8" fill="#d0a888" transform="rotate(23 32.5 97.7)"/><ellipse cx="4.2" cy="71.5" rx="1.3" ry="1.3" fill="#d0a888" transform="rotate(-20 4.2 71.5)"/><ellipse cx="91.4" cy="96.7" rx="2.8" ry="0.9" fill="#5e3e30" transform="rotate(-8 91.4 96.7)"/><ellipse cx="79.2" cy="108.2" rx="1.7" ry="1.7" fill="#d0a888" transform="rotate(-3 79.2 108.2)"/><ellipse cx="104.2" cy="109.1" rx="2.9" ry="1.7" fill="#704a3a" transform="rotate(0 104.2 109.1)"/></g>
  <g fill="#241a16" filter="url(#bl05)" opacity="0.85"><ellipse cx="20" cy="104" rx="2.2" ry="4.5"/><ellipse cx="37" cy="105" rx="2.2" ry="5"/><ellipse cx="52" cy="106" rx="2.5" ry="4.5"/><ellipse cx="61" cy="103" rx="2" ry="4.5"/><ellipse cx="82" cy="105" rx="2.6" ry="4.5"/><ellipse cx="97" cy="106" rx="2.6" ry="4.5"/><ellipse cx="30" cy="86" rx="1.8" ry="3.5"/></g>
  <path d="M31 33 Q42 33 52 35 Q66 38 76 40 Q90 39 100 46 L108 53 L31 46Z" fill="#ebeae6" filter="url(#bl05)"/>
  <path d="M0 0 L110 0 L110 54 L106 50 Q96 38 82 39 Q66 36 52 33 Q40 31 28 33 L0 38Z" fill="url(#cvceil)" filter="url(#bl05)"/>
  <g filter="url(#bl2)" opacity="0.45"><ellipse cx="46.1" cy="5.5" rx="5.2" ry="1.3" fill="#2a1e18"/><ellipse cx="27.5" cy="21.8" rx="4.2" ry="1.2" fill="#80584a"/><ellipse cx="93.0" cy="28.9" rx="2.3" ry="1.3" fill="#80584a"/><ellipse cx="49.4" cy="17.5" rx="2.4" ry="2.8" fill="#4a3428"/><ellipse cx="89.8" cy="30.1" rx="3.7" ry="1.8" fill="#6a4a3a"/><ellipse cx="41.1" cy="13.1" rx="3.5" ry="1.1" fill="#6a4a3a"/><ellipse cx="102.4" cy="28.5" rx="5.2" ry="1.3" fill="#80584a"/><ellipse cx="31.6" cy="28.2" rx="5.0" ry="1.9" fill="#2a1e18"/><ellipse cx="67.7" cy="30.8" rx="3.0" ry="2.7" fill="#6a4a3a"/><ellipse cx="60.4" cy="24.7" rx="2.4" ry="1.6" fill="#4a3428"/><ellipse cx="33.1" cy="1.6" rx="4.6" ry="2.2" fill="#4a3428"/><ellipse cx="6.9" cy="28.4" rx="4.4" ry="1.0" fill="#4a3428"/><ellipse cx="56.7" cy="8.2" rx="3.2" ry="1.0" fill="#2a1e18"/><ellipse cx="38.8" cy="19.4" rx="4.7" ry="1.2" fill="#2a1e18"/><ellipse cx="107.2" cy="2.3" rx="3.6" ry="1.9" fill="#6a4a3a"/><ellipse cx="69.9" cy="33.4" rx="5.0" ry="1.7" fill="#80584a"/><ellipse cx="7.4" cy="8.2" rx="5.1" ry="2.5" fill="#6a4a3a"/><ellipse cx="36.6" cy="1.5" rx="5.3" ry="1.4" fill="#80584a"/><ellipse cx="85.7" cy="15.8" rx="4.5" ry="2.6" fill="#4a3428"/><ellipse cx="6.9" cy="26.4" rx="2.1" ry="1.4" fill="#4a3428"/><ellipse cx="87.0" cy="30.1" rx="5.7" ry="2.0" fill="#80584a"/><ellipse cx="108.8" cy="18.5" rx="2.1" ry="2.3" fill="#80584a"/><ellipse cx="31.5" cy="29.3" rx="5.5" ry="1.7" fill="#6a4a3a"/><ellipse cx="13.7" cy="12.5" rx="5.0" ry="2.8" fill="#4a3428"/><ellipse cx="42.5" cy="33.1" rx="4.8" ry="1.7" fill="#4a3428"/><ellipse cx="87.7" cy="9.1" rx="4.9" ry="1.2" fill="#6a4a3a"/><ellipse cx="66.3" cy="28.0" rx="3.3" ry="1.2" fill="#80584a"/><ellipse cx="72.7" cy="10.4" rx="2.7" ry="1.9" fill="#4a3428"/><ellipse cx="49.2" cy="24.7" rx="4.5" ry="1.9" fill="#80584a"/><ellipse cx="70.3" cy="26.9" rx="2.3" ry="2.3" fill="#6a4a3a"/><ellipse cx="40.0" cy="27.2" rx="5.8" ry="1.3" fill="#2a1e18"/><ellipse cx="66.8" cy="26.6" rx="2.5" ry="1.5" fill="#6a4a3a"/><ellipse cx="71.0" cy="12.3" rx="4.4" ry="2.4" fill="#6a4a3a"/><ellipse cx="104.4" cy="12.6" rx="4.3" ry="2.1" fill="#6a4a3a"/><ellipse cx="43.8" cy="22.1" rx="5.8" ry="1.1" fill="#2a1e18"/><ellipse cx="20.5" cy="17.6" rx="3.0" ry="1.5" fill="#6a4a3a"/><ellipse cx="49.1" cy="33.9" rx="4.8" ry="3.0" fill="#80584a"/><ellipse cx="22.0" cy="4.6" rx="3.8" ry="2.8" fill="#6a4a3a"/><ellipse cx="49.0" cy="3.0" rx="4.7" ry="2.4" fill="#80584a"/><ellipse cx="60.5" cy="9.9" rx="5.4" ry="2.4" fill="#80584a"/><ellipse cx="102.0" cy="21.7" rx="4.0" ry="1.2" fill="#80584a"/><ellipse cx="22.1" cy="4.7" rx="2.1" ry="2.1" fill="#4a3428"/><ellipse cx="40.6" cy="27.3" rx="4.4" ry="1.2" fill="#2a1e18"/><ellipse cx="34.0" cy="34.0" rx="4.1" ry="2.5" fill="#4a3428"/><ellipse cx="90.6" cy="2.5" rx="4.6" ry="1.9" fill="#80584a"/><ellipse cx="74.8" cy="11.7" rx="5.1" ry="1.3" fill="#2a1e18"/><ellipse cx="55.3" cy="29.5" rx="4.1" ry="1.6" fill="#6a4a3a"/><ellipse cx="17.8" cy="31.8" rx="3.4" ry="2.9" fill="#2a1e18"/><ellipse cx="98.4" cy="28.8" rx="2.8" ry="2.9" fill="#80584a"/><ellipse cx="30.2" cy="21.3" rx="4.0" ry="1.3" fill="#6a4a3a"/></g>
  <path d="M0 34 L31 34 L33 56 L26 66 L0 58Z" fill="#4a3428" filter="url(#bl1)"/><path d="M4 44 L30 40 L32 56 L26 64 L6 58Z" fill="#2a201c" opacity="0.7" filter="url(#bl2)"/>
  <path d="M10 36 L30 34 L32 44 L16 44Z" fill="#6a4a3a" opacity="0.6" filter="url(#bl1)"/>
  <circle cx="88" cy="41" r="22" fill="url(#cvsun)"/>
  <g stroke="#f6e6cc" stroke-width="0.5" opacity="0.5"><path d="M88 41 L72 22 M88 41 L82 18 M88 41 L95 20 M88 41 L104 26 M88 41 L68 34"/></g>
</symbol>

<symbol id="castle" viewBox="0 0 110 110">
  <rect width="110" height="110" fill="url(#csky)"/>
  <g filter="url(#bl2)" opacity="0.75">
    <path d="M36 0 Q70 6 110 26 L110 14 Q84 2 64 0Z" fill="#54646e"/>
    <path d="M50 10 Q80 16 110 40 L110 36 Q84 14 60 8Z" fill="#60707a"/>
    <path d="M64 12 Q90 20 110 34 L110 28 Q94 18 76 12Z" fill="#66767e"/>
    <path d="M20 4 Q40 10 60 24 L66 22 Q44 6 30 0Z" fill="#d4dadb" opacity="0.6"/>
  </g>
  <!-- hills -->
  <path d="M0 42 Q18 38 30 41 Q42 44 52 47 L58 44 Q64 40 70 41 Q90 38 110 37 L110 110 L0 110Z" fill="#2e3430" filter="url(#bl05)"/>
  <!-- lower left bushes -->
  <g fill="#6e6c58" filter="url(#bl2)" opacity="0.7"><ellipse cx="26" cy="60" rx="9" ry="5"/><ellipse cx="40" cy="66" rx="8" ry="5"/><ellipse cx="46" cy="76" rx="5" ry="6"/><ellipse cx="14" cy="68" rx="6" ry="4"/><ellipse cx="84" cy="72" rx="8" ry="4" opacity="0.5"/></g>
  <!-- castle -->
  <path d="M56 38 L57.5 34 L59 37 L62 33.5 L64 37 L67 40 L70 58 L62 63 L54 58Z" fill="#86857c" filter="url(#bl05)"/>
  <path d="M62 38 L67 40 L70 58 L64 60Z" fill="#5a5a54" opacity="0.6" filter="url(#bl05)"/>
  <!-- road -->
  <path d="M58 61 L63 61 Q70 72 86 78 L110 86 L110 110 L36 110 Q46 88 58 61Z" fill="url(#croad)" filter="url(#bl05)"/>
  <ellipse cx="68" cy="78" rx="10" ry="8" fill="#a4a29c" opacity="0.35" filter="url(#bl2)"/>
  <path d="M63 61 Q70 72 110 84 L110 92 Q76 80 62 64Z" fill="#3a3e36" opacity="0.5" filter="url(#bl1)"/>
  <!-- left tree (thin) -->
  <g fill="#2a302a" filter="url(#bl05)" opacity="0.9">
    <path d="M2 0 L7 0 L9 14 L11 30 L10 46 L4 56 L0 56 L0 4Z"/>
    <path d="M6 8 L12 6 L8 14Z M8 18 L18 14 L19 18 L10 26Z M6 30 L14 28 L9 36Z"/>
  </g>
  <rect y="46" width="110" height="64" filter="url(#grain)" opacity="0.2"/>
  <rect width="110" height="110" fill="url(#vig)" opacity="0.7"/>
  <linearGradient id="cbot" x1="0" y1="70" x2="0" y2="110" gradientUnits="userSpaceOnUse"><stop offset="0" stop-color="#1e201e" stop-opacity="0"/><stop offset="1" stop-color="#1e201e" stop-opacity="0.85"/></linearGradient>
  <rect y="70" width="110" height="40" fill="url(#cbot)"/>
</symbol>

<symbol id="sunset" viewBox="0 0 110 110">
  <rect width="110" height="110" fill="url(#sglow)"/>
  <rect width="110" height="110" fill="url(#sdark)"/>
  <ellipse cx="57" cy="60" rx="14" ry="16" fill="#f0dc98" opacity="0.55" filter="url(#bl4)"/>
  <path d="M0 83 L110 81 L110 110 L0 110Z" fill="#2e281c" opacity="0.45" filter="url(#bl2)"/>
  <path d="M33 73 Q34 69 44 70 Q62 71 70 74 Q76 78 74 84 Q72 90 64 91 L42 92 Q36 96 33 92 Q30 84 33 73Z" fill="#17130d" filter="url(#bl05)"/>
  <path d="M40 90 L68 90 Q62 97 50 97 Q42 96 40 90Z" fill="#17130d" opacity="0.5" filter="url(#bl1)"/>
  <g fill="#1c1711" filter="url(#bl05)">
    <ellipse cx="57" cy="50" rx="2.6" ry="3.2"/>
    <path d="M54 52.5 L60 52.5 Q61.5 56 61 62 L59.5 62.5 L59.3 72 L57.6 72 L57.2 63 L56.6 72 L55 72 L54.6 62.5 L53.2 62 Q52.8 56 54 52.5Z"/>
    <path d="M54.5 92 L60 92 L59 108 L55.5 108Z" opacity="0.55"/>
  </g>
  <rect width="110" height="110" filter="url(#grain)" opacity="0.08"/>
</symbol>

<symbol id="beach" viewBox="0 0 110 110">
  <rect width="110" height="110" fill="url(#bdeep)"/>
  <!-- teal band -->
  <path d="M0 0 L110 0 L110 28 Q100 56 70 74 Q40 90 0 94Z" fill="#2a90aa" filter="url(#bl2)"/>
  <path d="M0 0 L108 0 L106 20 Q96 48 66 66 Q36 80 0 82Z" fill="#6a9098" filter="url(#bl2)"/>
  <!-- reef -->
  <path d="M0 0 L104 0 Q98 36 70 56 Q40 72 0 74Z" fill="#9a9896" filter="url(#bl2)"/>
  <path d="M0 50 Q30 50 62 54 Q46 66 0 66Z" fill="#a68e80" filter="url(#bl2)"/>
  <path d="M0 30 Q40 26 74 18 L82 0 L104 0 Q98 26 72 44 Q42 54 0 52Z" fill="#8a8e92" filter="url(#bl1)"/>
  <g filter="url(#bl2)" opacity="0.85">
    <path d="M2 36 Q20 34 34 40 Q20 46 4 44Z" fill="#c4c8ca"/>
    <path d="M30 34 Q50 28 70 24 Q60 36 40 40Z" fill="#5c6268"/>
    <path d="M60 28 Q76 22 90 14 Q84 28 68 36Z" fill="#50565c"/>
    <path d="M80 4 Q92 0 100 2 Q94 14 84 16Z" fill="#b0b8bc"/>
    <path d="M10 56 Q30 52 50 58 Q30 62 12 60Z" fill="#9a9090"/>
  </g>
  <!-- beach white -->
  <path d="M0 28 Q28 26 46 18 Q56 10 58 0 L76 0 Q78 8 64 16 Q44 32 0 35Z" fill="#dae2e2" filter="url(#bl05)"/>
  <path d="M64 0 L80 0 Q82 8 74 12 Q68 8 64 0Z" fill="#c8dce4" filter="url(#bl1)"/>
  <!-- forest -->
  <path d="M0 0 L57 0 Q52 10 42 16 Q26 24 0 28Z" fill="#3a4a2b" filter="url(#bl05)"/>
  <g fill="#546a3c" opacity="0.5" filter="url(#bl05)"><circle cx="10" cy="10" r="3"/><circle cx="30" cy="6" r="3"/><circle cx="22" cy="18" r="2.5"/><circle cx="44" cy="8" r="2.5"/><circle cx="6" cy="22" r="2"/></g>
  <rect width="70" height="30" filter="url(#grainw)" opacity="0.1"/>
</symbol>

<symbol id="teal" viewBox="0 0 110 38">
  <rect width="110" height="38" fill="#187868"/>
  <rect width="110" height="38" filter="url(#grain)" opacity="0.1"/>
  <g filter="url(#bl05)">
    <ellipse cx="32" cy="19" rx="5" ry="4.5" fill="#5a6a66" stroke="#d0dcd8" stroke-width="1.6"/>
    <ellipse cx="46" cy="2" rx="3" ry="3" fill="#7a5040"/><ellipse cx="51" cy="2" rx="3.5" ry="3" fill="#d8dcd8"/><ellipse cx="56" cy="1.5" rx="2.5" ry="2.5" fill="#a88070"/>
    <ellipse cx="60" cy="9" rx="1.5" ry="1.5" fill="#a89080"/><ellipse cx="55" cy="14" rx="2" ry="2.5" fill="#c0a898"/><ellipse cx="60" cy="16" rx="2" ry="2" fill="#8a6a5a"/><ellipse cx="64" cy="15" rx="1.8" ry="2.2" fill="#d0c0b0"/>
    <ellipse cx="51" cy="23" rx="1.5" ry="2" fill="#c8b8a8"/>
    <ellipse cx="43" cy="33" rx="2.5" ry="3.5" fill="#d0c4b8"/><ellipse cx="45" cy="37" rx="2.5" ry="2" fill="#7a5444"/>
    <ellipse cx="75" cy="31" rx="3.5" ry="6" fill="#7a4e3a"/><ellipse cx="80" cy="34" rx="3" ry="4" fill="#a87a62"/><ellipse cx="85" cy="31" rx="2.5" ry="5" fill="#b0a0a0"/><ellipse cx="90" cy="27" rx="2" ry="4" fill="#9a8a8a"/><ellipse cx="78" cy="25" rx="2" ry="2" fill="#c8b0a0"/>
  </g>
</symbol>

<symbol id="skycrop" viewBox="0 0 110 38">
  <rect width="110" height="38" fill="#e0e0de"/>
  <g filter="url(#bl4)">
    <ellipse cx="8" cy="10" rx="16" ry="10" fill="#bcc2c8"/>
    <ellipse cx="45" cy="12" rx="25" ry="8" fill="#ecebe8"/>
    <ellipse cx="30" cy="38" rx="30" ry="10" fill="#f2ece4"/>
    <ellipse cx="98" cy="12" rx="20" ry="22" fill="#8ab0d6"/>
    <ellipse cx="62" cy="26" rx="10" ry="6" fill="#c4d0dc"/>
  </g>
  <g fill="#1e1e22" filter="url(#bl05)">
    <ellipse cx="75.5" cy="19" rx="3" ry="4"/>
    <path d="M72 24 Q76 22 80 24 L82 30 L84 38 L70 38 L71.5 30Z"/>
  </g>
</symbol>

<symbol id="dark" viewBox="0 0 110 38">
  <rect width="110" height="38" fill="#141414"/>
  <g filter="url(#bl2)" fill="#8c8c88" opacity="0.9">
    <ellipse cx="3" cy="24" rx="4" ry="8"/><ellipse cx="28" cy="24" rx="9" ry="6"/><ellipse cx="98" cy="9" rx="10" ry="9"/><ellipse cx="82" cy="3" rx="5" ry="4"/><ellipse cx="72" cy="14" rx="4" ry="3"/>
  </g>
  <g fill="#e6c8b0" filter="url(#bl05)">
    <ellipse cx="45" cy="36" rx="5" ry="3"/><ellipse cx="52" cy="34" rx="3" ry="3"/><ellipse cx="64" cy="32" rx="3" ry="4"/><ellipse cx="70" cy="35" rx="3" ry="3"/><ellipse cx="88" cy="35" rx="5" ry="3"/><ellipse cx="94" cy="33" rx="3" ry="3"/>
  </g>
</symbol>

<symbol id="ice" viewBox="0 0 110 38">
<rect width="110" height="38" fill="#8cb2d8"/>
<ellipse cx="1.5" cy="2.1" rx="9.8" ry="5.1" fill="#c8def0" stroke="#7ea6d0" stroke-width="0.7" transform="rotate(5 1.5 2.1)"/>
<ellipse cx="19.8" cy="1.1" rx="8.3" ry="4.1" fill="#bcd6ee" stroke="#7ea6d0" stroke-width="0.7" transform="rotate(-6 19.8 1.1)"/>
<ellipse cx="36.2" cy="1.8" rx="8.3" ry="4.8" fill="#bcd6ee" stroke="#7ea6d0" stroke-width="0.7" transform="rotate(-8 36.2 1.8)"/>
<ellipse cx="52.5" cy="2.4" rx="8.4" ry="5.4" fill="#b8d2ea" stroke="#7ea6d0" stroke-width="0.7" transform="rotate(-5 52.5 2.4)"/>
<ellipse cx="69.0" cy="1.9" rx="7.9" ry="4.9" fill="#bcd6ee" stroke="#7ea6d0" stroke-width="0.7" transform="rotate(-6 69.0 1.9)"/>
<ellipse cx="84.5" cy="2.2" rx="7.3" ry="5.2" fill="#bcd6ee" stroke="#7ea6d0" stroke-width="0.7" transform="rotate(6 84.5 2.2)"/>
<ellipse cx="102.7" cy="1.8" rx="11.1" ry="4.8" fill="#bcd6ee" stroke="#7ea6d0" stroke-width="0.7" transform="rotate(-5 102.7 1.8)"/>
<ellipse cx="122.3" cy="2.4" rx="8.1" ry="5.4" fill="#b8d2ea" stroke="#7ea6d0" stroke-width="0.7" transform="rotate(-3 122.3 2.4)"/>
<ellipse cx="6.7" cy="9.7" rx="8.0" ry="4.2" fill="#c8def0" stroke="#7ea6d0" stroke-width="0.7" transform="rotate(-3 6.7 9.7)"/>
<ellipse cx="24.5" cy="10.4" rx="9.6" ry="4.9" fill="#d0e4f4" stroke="#7ea6d0" stroke-width="0.7" transform="rotate(-7 24.5 10.4)"/>
<ellipse cx="42.4" cy="10.5" rx="8.5" ry="5.0" fill="#bcd6ee" stroke="#7ea6d0" stroke-width="0.7" transform="rotate(-0 42.4 10.5)"/>
<ellipse cx="58.6" cy="11.0" rx="7.5" ry="5.5" fill="#c8def0" stroke="#7ea6d0" stroke-width="0.7" transform="rotate(7 58.6 11.0)"/>
<ellipse cx="74.8" cy="10.3" rx="8.9" ry="4.8" fill="#b8d2ea" stroke="#7ea6d0" stroke-width="0.7" transform="rotate(-2 74.8 10.3)"/>
<ellipse cx="91.0" cy="9.6" rx="7.3" ry="4.1" fill="#bcd6ee" stroke="#7ea6d0" stroke-width="0.7" transform="rotate(2 91.0 9.6)"/>
<ellipse cx="106.5" cy="9.9" rx="7.8" ry="4.4" fill="#b8d2ea" stroke="#7ea6d0" stroke-width="0.7" transform="rotate(-2 106.5 9.9)"/>
<ellipse cx="123.4" cy="10.7" rx="9.4" ry="5.2" fill="#c8def0" stroke="#7ea6d0" stroke-width="0.7" transform="rotate(1 123.4 10.7)"/>
<ellipse cx="0.5" cy="18.4" rx="8.8" ry="4.4" fill="#b8d2ea" stroke="#7ea6d0" stroke-width="0.7" transform="rotate(7 0.5 18.4)"/>
<ellipse cx="17.4" cy="18.9" rx="8.7" ry="4.9" fill="#bcd6ee" stroke="#7ea6d0" stroke-width="0.7" transform="rotate(-3 17.4 18.9)"/>
<ellipse cx="35.9" cy="18.5" rx="9.5" ry="4.5" fill="#d0e4f4" stroke="#7ea6d0" stroke-width="0.7" transform="rotate(-3 35.9 18.5)"/>
<ellipse cx="55.3" cy="19.1" rx="9.8" ry="5.1" fill="#d0e4f4" stroke="#7ea6d0" stroke-width="0.7" transform="rotate(8 55.3 19.1)"/>
<ellipse cx="72.2" cy="19.5" rx="7.5" ry="5.5" fill="#b8d2ea" stroke="#7ea6d0" stroke-width="0.7" transform="rotate(-7 72.2 19.5)"/>
<ellipse cx="88.5" cy="18.4" rx="8.7" ry="4.4" fill="#b8d2ea" stroke="#7ea6d0" stroke-width="0.7" transform="rotate(-6 88.5 18.4)"/>
<ellipse cx="107.4" cy="19.2" rx="9.9" ry="5.2" fill="#d0e4f4" stroke="#7ea6d0" stroke-width="0.7" transform="rotate(5 107.4 19.2)"/>
<ellipse cx="8.9" cy="27.9" rx="10.2" ry="5.4" fill="#b8d2ea" stroke="#7ea6d0" stroke-width="0.7" transform="rotate(-6 8.9 27.9)"/>
<ellipse cx="26.9" cy="27.8" rx="7.9" ry="5.3" fill="#d0e4f4" stroke="#7ea6d0" stroke-width="0.7" transform="rotate(-6 26.9 27.8)"/>
<ellipse cx="44.9" cy="26.8" rx="9.8" ry="4.3" fill="#b8d2ea" stroke="#7ea6d0" stroke-width="0.7" transform="rotate(7 44.9 26.8)"/>
<ellipse cx="63.3" cy="26.9" rx="8.6" ry="4.4" fill="#b8d2ea" stroke="#7ea6d0" stroke-width="0.7" transform="rotate(-2 63.3 26.9)"/>
<ellipse cx="80.3" cy="28.0" rx="8.8" ry="5.5" fill="#bcd6ee" stroke="#7ea6d0" stroke-width="0.7" transform="rotate(2 80.3 28.0)"/>
<ellipse cx="97.6" cy="26.6" rx="8.7" ry="4.1" fill="#d0e4f4" stroke="#7ea6d0" stroke-width="0.7" transform="rotate(0 97.6 26.6)"/>
<ellipse cx="115.5" cy="26.6" rx="9.3" ry="4.1" fill="#d0e4f4" stroke="#7ea6d0" stroke-width="0.7" transform="rotate(3 115.5 26.6)"/>
<ellipse cx="2.0" cy="35.5" rx="10.3" ry="4.5" fill="#d0e4f4" stroke="#7ea6d0" stroke-width="0.7" transform="rotate(5 2.0 35.5)"/>
<ellipse cx="23.3" cy="36.1" rx="11.2" ry="5.1" fill="#d0e4f4" stroke="#7ea6d0" stroke-width="0.7" transform="rotate(2 23.3 36.1)"/>
<ellipse cx="41.8" cy="35.8" rx="7.3" ry="4.8" fill="#d0e4f4" stroke="#7ea6d0" stroke-width="0.7" transform="rotate(-3 41.8 35.8)"/>
<ellipse cx="57.3" cy="35.8" rx="8.5" ry="4.8" fill="#d0e4f4" stroke="#7ea6d0" stroke-width="0.7" transform="rotate(-2 57.3 35.8)"/>
<ellipse cx="76.0" cy="36.2" rx="10.3" ry="5.2" fill="#d0e4f4" stroke="#7ea6d0" stroke-width="0.7" transform="rotate(7 76.0 36.2)"/>
<ellipse cx="96.6" cy="35.7" rx="10.8" ry="4.7" fill="#d0e4f4" stroke="#7ea6d0" stroke-width="0.7" transform="rotate(7 96.6 35.7)"/>
<ellipse cx="116.7" cy="35.2" rx="9.4" ry="4.2" fill="#d0e4f4" stroke="#7ea6d0" stroke-width="0.7" transform="rotate(7 116.7 35.2)"/>
</symbol>
</svg>

<svg class="photo" style="left:296px;top:197px" viewBox="0 0 110 110" preserveAspectRatio="none"><use href="#desert"/></svg>
<svg class="abs" style="left:341px;top:242px" width="20" height="20" viewBox="0 0 20 20"><circle cx="10" cy="10" r="9.5" fill="#fff"/><path d="M8 6 L14 10 L8 14Z" fill="#333"/></svg>
<div class="fname" style="left:295px;top:314px">20190119-00_03_31.flv</div>
<div class="fdate" style="left:295px;top:329px">2019-01-19 00:04:08</div>
<svg class="photo" style="left:425px;top:197px" viewBox="0 0 110 110" preserveAspectRatio="none"><use href="#cave"/></svg>
<div class="fname" style="left:424px;top:314px">20190121_220129.jpg</div>
<div class="fdate" style="left:424px;top:329px">2019-01-19 00:03:33</div>
<svg class="photo" style="left:553.5px;top:197px" viewBox="0 0 110 110" preserveAspectRatio="none"><use href="#castle"/></svg>
<div class="fname" style="left:552px;top:314px">20190121_220022.jpg</div>
<div class="fdate" style="left:552px;top:329px">2019-01-19 00:02:25</div>
<svg class="photo" style="left:682px;top:197px" viewBox="0 0 110 110" preserveAspectRatio="none"><use href="#sunset"/></svg>
<div class="fname" style="left:681px;top:314px">20190121_215910.jpg</div>
<div class="fdate" style="left:681px;top:329px">2019-01-19 00:01:14</div>
<svg class="photo" style="left:810.5px;top:197px" viewBox="0 0 110 110" preserveAspectRatio="none"><use href="#beach"/></svg>
<div class="fname" style="left:809px;top:314px">20190121_215816.jpg</div>
<div class="fdate" style="left:809px;top:329px">2019-01-19 00:00:20</div>
<svg class="photo mir" style="left:298px;top:397px" viewBox="0 0 110 110" preserveAspectRatio="none"><use href="#beach"/></svg>
<div class="fname" style="left:295px;top:514px">20190119-00_03_31.flv</div>
<div class="fdate" style="left:295px;top:529px">2019-01-19 00:04:08</div>
<svg class="photo mir" style="left:427px;top:397px" viewBox="0 0 110 110" preserveAspectRatio="none"><use href="#castle"/></svg>
<div class="fname" style="left:424px;top:514px">20190121_220129.jpg</div>
<div class="fdate" style="left:424px;top:529px">2019-01-19 00:03:33</div>
<svg class="photo" style="left:555.5px;top:397px" viewBox="0 0 110 110" preserveAspectRatio="none"><use href="#desert"/></svg>
<svg class="abs" style="left:600.5px;top:442px" width="20" height="20" viewBox="0 0 20 20"><circle cx="10" cy="10" r="9.5" fill="#fff"/><path d="M8 6 L14 10 L8 14Z" fill="#333"/></svg>
<div class="fname" style="left:552px;top:514px">20190121_220022.jpg</div>
<div class="fdate" style="left:552px;top:529px">2019-01-19 00:02:25</div>
<svg class="photo mir" style="left:684px;top:397px" viewBox="0 0 110 110" preserveAspectRatio="none"><use href="#cave"/></svg>
<div class="fname" style="left:681px;top:514px">20190121_215910.jpg</div>
<div class="fdate" style="left:681px;top:529px">2019-01-19 00:01:14</div>
<svg class="photo mir" style="left:812.5px;top:397px" viewBox="0 0 110 110" preserveAspectRatio="none"><use href="#castle"/></svg>
<div class="fname" style="left:809px;top:514px">20190121_215816.jpg</div>
<div class="fdate" style="left:809px;top:529px">2019-01-19 00:00:20</div>
<svg class="photo" style="left:296px;top:597px;height:38px;border-radius:2px 2px 0 0" viewBox="0 0 110 38" preserveAspectRatio="none"><use href="#teal"/></svg>
<svg class="photo" style="left:425px;top:597px;height:38px;border-radius:2px 2px 0 0" viewBox="0 0 110 38" preserveAspectRatio="none"><use href="#skycrop"/></svg>
<svg class="photo" style="left:553.5px;top:597px;height:38px;border-radius:2px 2px 0 0" viewBox="0 0 110 38" preserveAspectRatio="none"><use href="#dark"/></svg>
<svg class="photo" style="left:682px;top:597px;height:38px;border-radius:2px 2px 0 0" viewBox="0 0 110 38" preserveAspectRatio="none"><use href="#ice"/></svg>
<svg class="photo" style="left:811px;top:597px;height:38px;border-radius:2px 2px 0 0" viewBox="0 0 110 38" preserveAspectRatio="none"><use href="#skycrop"/></svg>
</body></html>
